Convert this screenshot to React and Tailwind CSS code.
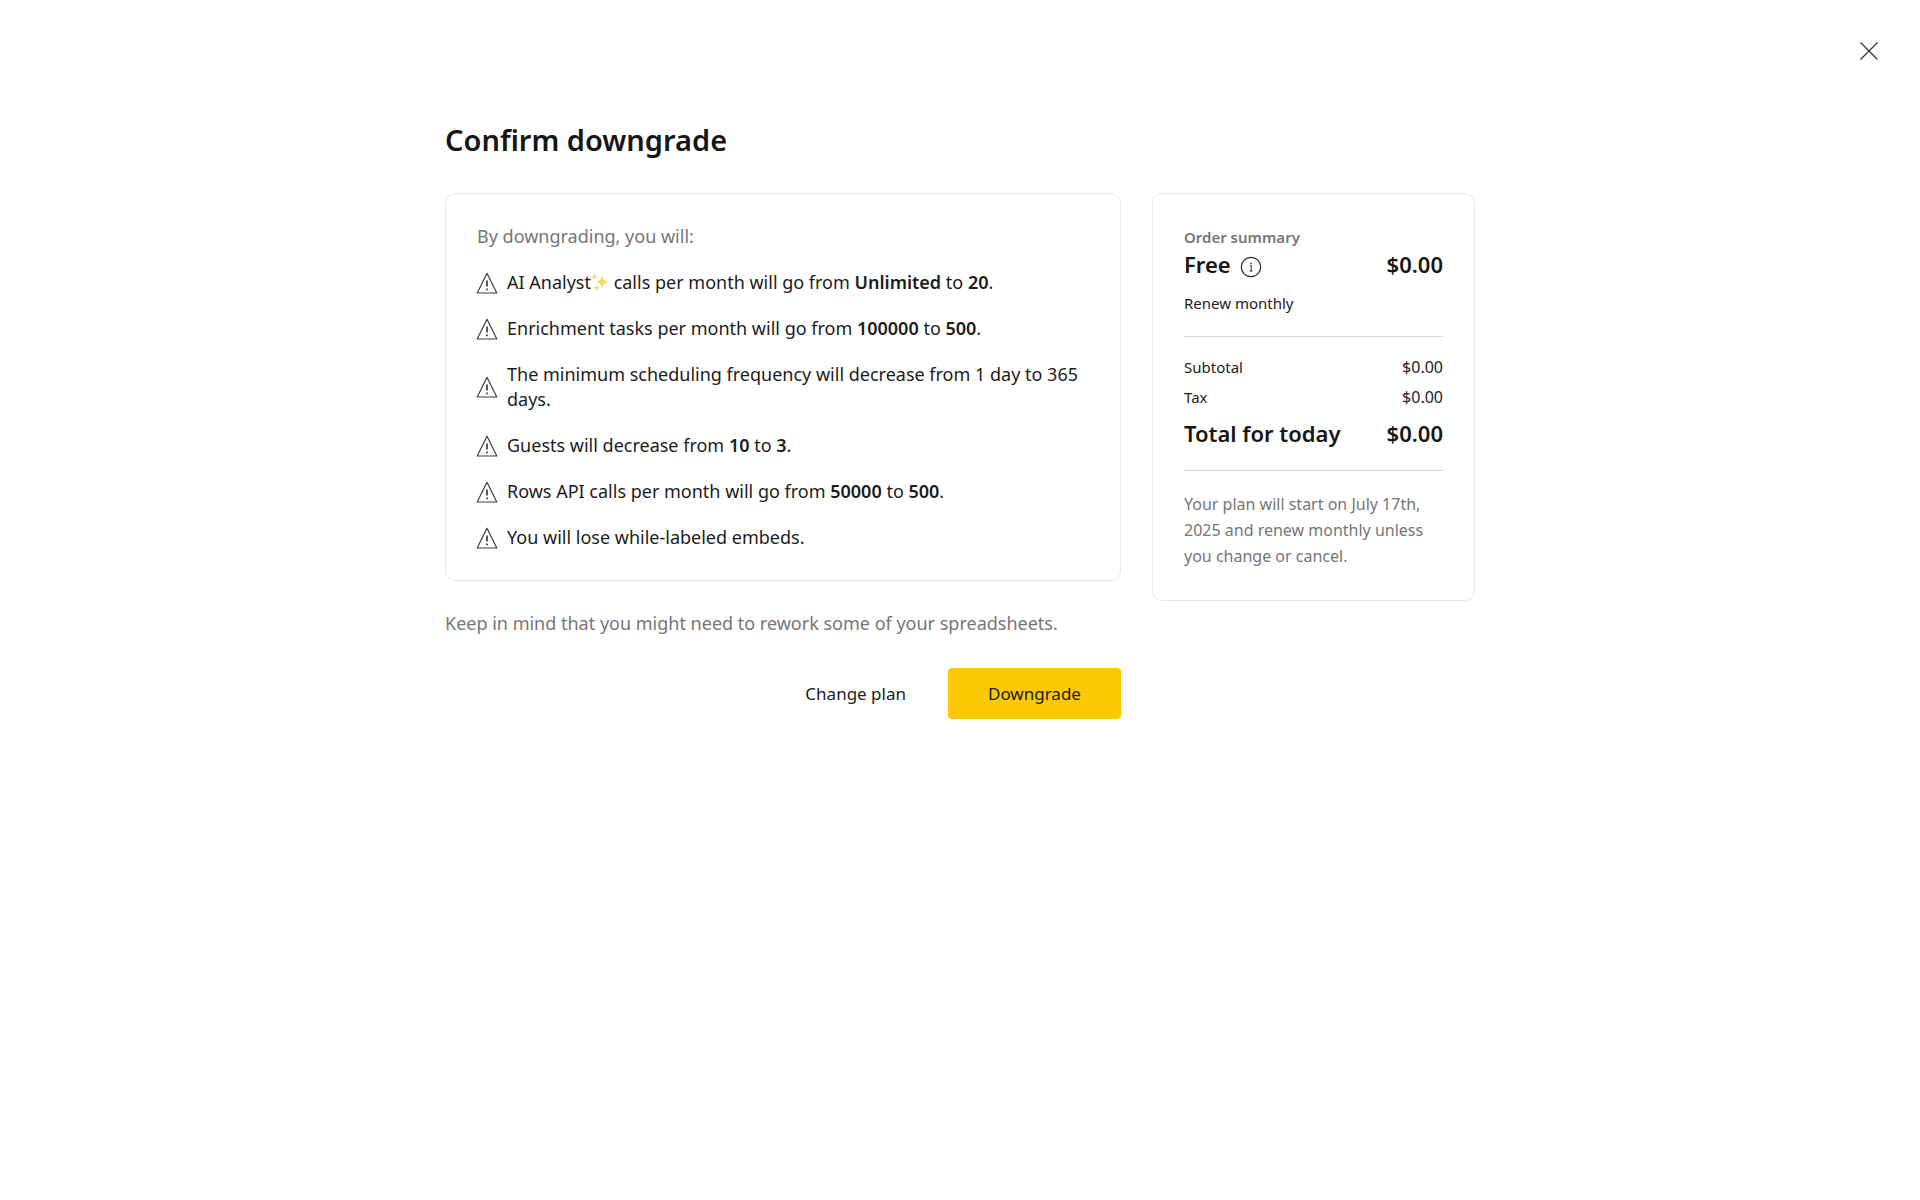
import React from "react";

const changes = [
  {
    id: "analyst",
    text: (
      <>
        AI Analyst
        <Sparkles /> calls per month will go from <b>Unlimited</b> to <b>20</b>.
      </>
    ),
  },
  {
    id: "enrichment",
    text: (
      <>
        Enrichment tasks per month will go from <b>100000</b> to <b>500</b>.
      </>
    ),
  },
  {
    id: "scheduling",
    text: "The minimum scheduling frequency will decrease from 1 day to 365 days.",
  },
  {
    id: "guests",
    text: (
      <>
        Guests will decrease from <b>10</b> to <b>3</b>.
      </>
    ),
  },
  {
    id: "api",
    text: (
      <>
        Rows API calls per month will go from <b>50000</b> to <b>500</b>.
      </>
    ),
  },
  { id: "embeds", text: "You will lose while-labeled embeds." },
];

function Sparkles() {
  return (
    <svg viewBox="0 0 16 16" className="inline-block size-[18px] align-[-2px]" aria-hidden="true">
      <path
        d="M9.8 1.5C10.5 5.6 11.6 6.9 15.6 7.8C11.6 8.7 10.5 10 9.8 14.1C9.1 10 8 8.7 4 7.8C8 6.9 9.1 5.6 9.8 1.5Z"
        fill="#f8d95c"
      />
      <path
        d="M3 .5C3.4 2.3 4 2.9 5.6 3.3C4 3.7 3.4 4.3 3 6.1C2.6 4.3 2 3.7 .4 3.3C2 2.9 2.6 2.3 3 .5Z"
        fill="#f3d67a"
      />
      <path
        d="M5 10.1C5.4 11.9 6 12.6 7.8 13C6 13.4 5.4 14.1 5 15.9C4.6 14.1 4 13.4 2.2 13C4 12.6 4.6 11.9 5 10.1Z"
        fill="#f3d67a"
      />
    </svg>
  );
}

function WarningIcon() {
  return (
    <svg
      viewBox="0 0 22 22"
      className="-ml-px size-[22px] shrink-0"
      fill="none"
      stroke="#3c3c3c"
      aria-hidden="true"
    >
      <path d="M11 1.3L20.8 21H1.2Z" strokeWidth="1.2" strokeLinejoin="round" />
      <path d="M11 8.6V14.6M11 16.4V18.2" strokeWidth="1.7" />
    </svg>
  );
}

function InfoIcon() {
  return (
    <svg viewBox="0 0 22 22" className="size-[22px]" fill="none" stroke="#2c2c2c" aria-hidden="true">
      <circle cx="11" cy="11" r="9.7" strokeWidth="1.2" />
      <path d="M9.8 9.4H11.2V15M9.6 15H12.6" strokeWidth="1" />
      <circle cx="11" cy="7.2" r=".8" fill="#2c2c2c" stroke="none" />
    </svg>
  );
}

const App = () => {
  return (
    <div className="min-h-screen bg-white font-['Noto_Sans',sans-serif] text-[18px] leading-[25px] text-[#1c1c1c]">
      {/* CLOSE */}
      <header className="flex justify-end pt-[31px] pr-[31px]">
        <button type="button" aria-label="Close" className="flex size-10 items-center justify-center">
          <svg viewBox="0 0 18 18" className="size-[18px]" stroke="#333" strokeWidth="1.2" fill="none">
            <path d="M.5 .5L17.5 17.5M17.5 .5L.5 17.5" />
          </svg>
        </button>
      </header>

      <main className="mx-auto max-w-[1030px] pt-[49px]">
        <h1 className="text-[29px] leading-[40px] font-semibold text-[#161616]">Confirm downgrade</h1>

        <div className="mt-[33px] grid grid-cols-[1fr_323px] items-start gap-[31px]">
          {/* CHANGES */}
          <section>
            <div className="rounded-[10px] border border-[#e8e8e8] px-[31px] py-[30px]">
              <p className="text-[#767676]">By downgrading, you will:</p>
              <ul className="mt-[21px] flex flex-col gap-[21px] [&_b]:font-semibold">
                {changes.map((item) => (
                  <li key={item.id} className="flex items-center gap-[9px]">
                    <WarningIcon />
                    <span>{item.text}</span>
                  </li>
                ))}
              </ul>
            </div>

            <p className="mt-[30px] text-[#767676]">
              Keep in mind that you might need to rework some of your spreadsheets.
            </p>

            <div className="mt-8 flex justify-end text-[17px]">
              <button type="button" className="h-[51px] px-[42px]">
                Change plan
              </button>
              <button type="button" className="h-[51px] w-[173px] rounded bg-[#fdc804]">
                Downgrade
              </button>
            </div>
          </section>

          {/* ORDER SUMMARY */}
          <aside className="rounded-[10px] border border-[#e8e8e8] p-[31px] text-[15px]">
            <h2 className="font-semibold text-[#767676]">Order summary</h2>
            <div className="flex justify-between text-[22px] leading-[28px] font-semibold text-[#161616]">
              <div className="flex items-end gap-[9px]">
                Free
                <InfoIcon />
              </div>
              <span>$0.00</span>
            </div>
            <p className="mt-[13px]">Renew monthly</p>

            <hr className="mt-5 border-[#d9d9d9]" />

            <div className="mt-[18px] flex justify-between">
              <span>Subtotal</span>
              <span className="text-[16px]">$0.00</span>
            </div>
            <div className="mt-[5px] flex justify-between">
              <span>Tax</span>
              <span className="text-[16px]">$0.00</span>
            </div>
            <div className="mt-[9px] flex justify-between text-[22px] leading-[28px] font-semibold text-[#161616]">
              <span>Total for today</span>
              <span>$0.00</span>
            </div>

            <hr className="mt-[23px] border-[#d9d9d9]" />

            <p className="mt-5 text-[16px] leading-[26px] text-[#767676]">
              Your plan will start on July 17th, 2025 and renew monthly unless you change or cancel.
            </p>
          </aside>
        </div>
      </main>
    </div>
  );
};

export default App;
